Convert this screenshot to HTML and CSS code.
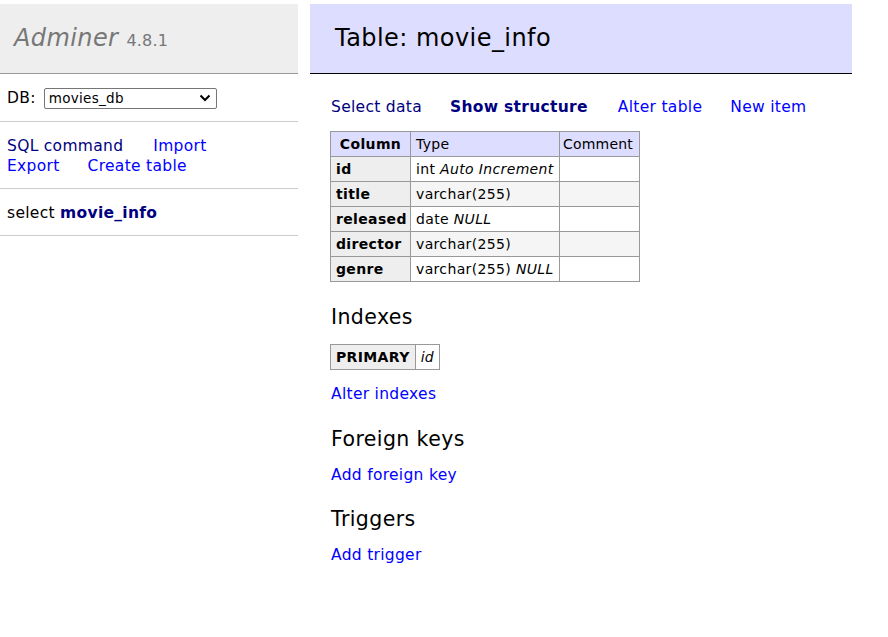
FILE: index.html
```html
<!DOCTYPE html>
<html>
<head>
<meta charset="utf-8">
<title>Table: movie_info - Adminer</title>
<link rel="stylesheet" href="styles.css">
</head>
<body>
<div class="page">
  <aside class="menu">
    <h1 class="logo"><a class="h1" href="#">Adminer</a> <span class="version">4.8.1</span></h1>
    <div class="sect db">
      <span>DB:</span>
      <div class="select"><span>movies_db</span>
        <svg width="12" height="8" viewBox="0 0 12 8"><path d="M1.5 1.5 L6 6 L10.5 1.5" fill="none" stroke="#000" stroke-width="2"/></svg>
      </div>
    </div>
    <div class="sect links-side">
      <div class="row"><a class="visited first" href="#">SQL command</a><a href="#">Import</a></div>
      <div class="row"><a href="#">Export</a><a href="#">Create table</a></div>
    </div>
    <div class="sect tables">select <a class="visited strong" href="#">movie_info</a></div>
  </aside>
  <main class="content">
    <h2 class="title">Table: movie_info</h2>
    <nav class="links">
      <a class="visited" href="#">Select data</a>
      <a class="visited strong" href="#">Show structure</a>
      <a href="#">Alter table</a>
      <a href="#">New item</a>
    </nav>
    <table class="grid struct">
      <colgroup><col class="c1"><col class="c2"><col class="c3"></colgroup>
      <thead>
        <tr><th>Column</th><td>Type</td><td>Comment</td></tr>
      </thead>
      <tbody>
        <tr><th>id</th><td>int <i>Auto Increment</i></td><td></td></tr>
        <tr class="odd"><th>title</th><td>varchar(255)</td><td></td></tr>
        <tr><th>released</th><td>date <i>NULL</i></td><td></td></tr>
        <tr class="odd"><th>director</th><td>varchar(255)</td><td></td></tr>
        <tr><th>genre</th><td>varchar(255) <i>NULL</i></td><td></td></tr>
      </tbody>
    </table>
    <h3 class="sub">Indexes</h3>
    <table class="grid idx">
      <tbody><tr><th>PRIMARY</th><td><i>id</i></td></tr></tbody>
    </table>
    <p class="lnk"><a href="#">Alter indexes</a></p>
    <h3 class="sub">Foreign keys</h3>
    <p class="lnk"><a href="#">Add foreign key</a></p>
    <h3 class="sub trig">Triggers</h3>
    <p class="lnk"><a href="#">Add trigger</a></p>
  </main>
</div>
</body>
</html>
```

FILE: styles.css
```css
html, body { margin: 0; padding: 0; background: #fff; }
body {
  font-family: "DejaVu Sans", Verdana, sans-serif;
  font-size: 15.5px;
  letter-spacing: 0.3px;
  line-height: 20px;
  color: #000;
}
a { color: #0000ff; text-decoration: none; }
a.visited { color: #000080; }
.strong { font-weight: bold; }

.page { display: flex; align-items: flex-start; padding-top: 4px; }

.menu { width: 298px; flex: none; }
.logo {
  margin: 0;
  height: 70px;
  box-sizing: border-box;
  padding: 20px 0 0 14px;
  background: #eee;
  border-bottom: 1px solid #999;
  font-weight: normal;
  font-size: 24px;
  letter-spacing: 0.4px;
  line-height: 28px;
  color: #777;
}
.h1 { color: #777; font-style: italic; }
.version { font-size: 16px; color: #777; letter-spacing: 0.2px; }

.sect { border-bottom: 1px solid #ccc; padding: 0 7px; }
.db { display: flex; align-items: center; gap: 8px; height: 48px; box-sizing: border-box; padding-top: 1px; }
.select {
  width: 173px; height: 21px; box-sizing: border-box;
  border: 1px solid #767676; border-radius: 2px;
  display: flex; align-items: center; justify-content: space-between;
  padding: 0 5px 0 4px; font-size: 13.5px; letter-spacing: 0.3px; background: #fff;
}
.links-side { padding-top: 14px; padding-bottom: 12px; }
.links-side .row { display: flex; }
.links-side .row a { margin-right: 28px; }
.links-side .row a.first { margin-right: 30px; }
.tables { padding-top: 14px; padding-bottom: 12px; }

.content { margin-left: 12px; width: 542px; flex: none; }
.title {
  margin: 0;
  height: 70px; box-sizing: border-box;
  padding: 20px 0 0 25px;
  background: #ddf;
  border-bottom: 1px solid #000;
  font-weight: normal;
  font-size: 24px;
  letter-spacing: 0.45px;
  line-height: 28px;
}
.links { display: flex; padding: 23px 0 0 21px; height: 20px; }
.links a { margin-right: 28px; }
.links a.strong { margin-right: 30px; }

.grid { border-collapse: collapse; font-size: 14px; letter-spacing: 0.35px; margin-left: 20px; }
.grid th, .grid td {
  border: 1px solid #999;
  padding: 4px 5px;
  line-height: 16px;
  text-align: left;
  white-space: nowrap;
}
.grid th { background: #eee; font-weight: bold; }
.struct { margin-top: 14px; table-layout: fixed; width: 309px; }
.struct col.c1 { width: 80px; }
.struct col.c2 { width: 149px; }
.struct col.c3 { width: 80px; }
.struct thead th, .struct thead td { background: #ddf; }
.struct thead th { text-align: center; padding: 4px 2px; }
.struct thead td:last-child { padding: 4px 3px; letter-spacing: 0.2px; }
.struct tr.odd td { background: #f5f5f5; }

.sub { margin: 23px 0 0 21px; font-weight: normal; font-size: 20.5px; letter-spacing: 0.4px; line-height: 24px; }
.sub.trig { margin-top: 22px; }
.idx { margin-top: 15px; }
.lnk { margin: 14px 0 0 21px; }
```
